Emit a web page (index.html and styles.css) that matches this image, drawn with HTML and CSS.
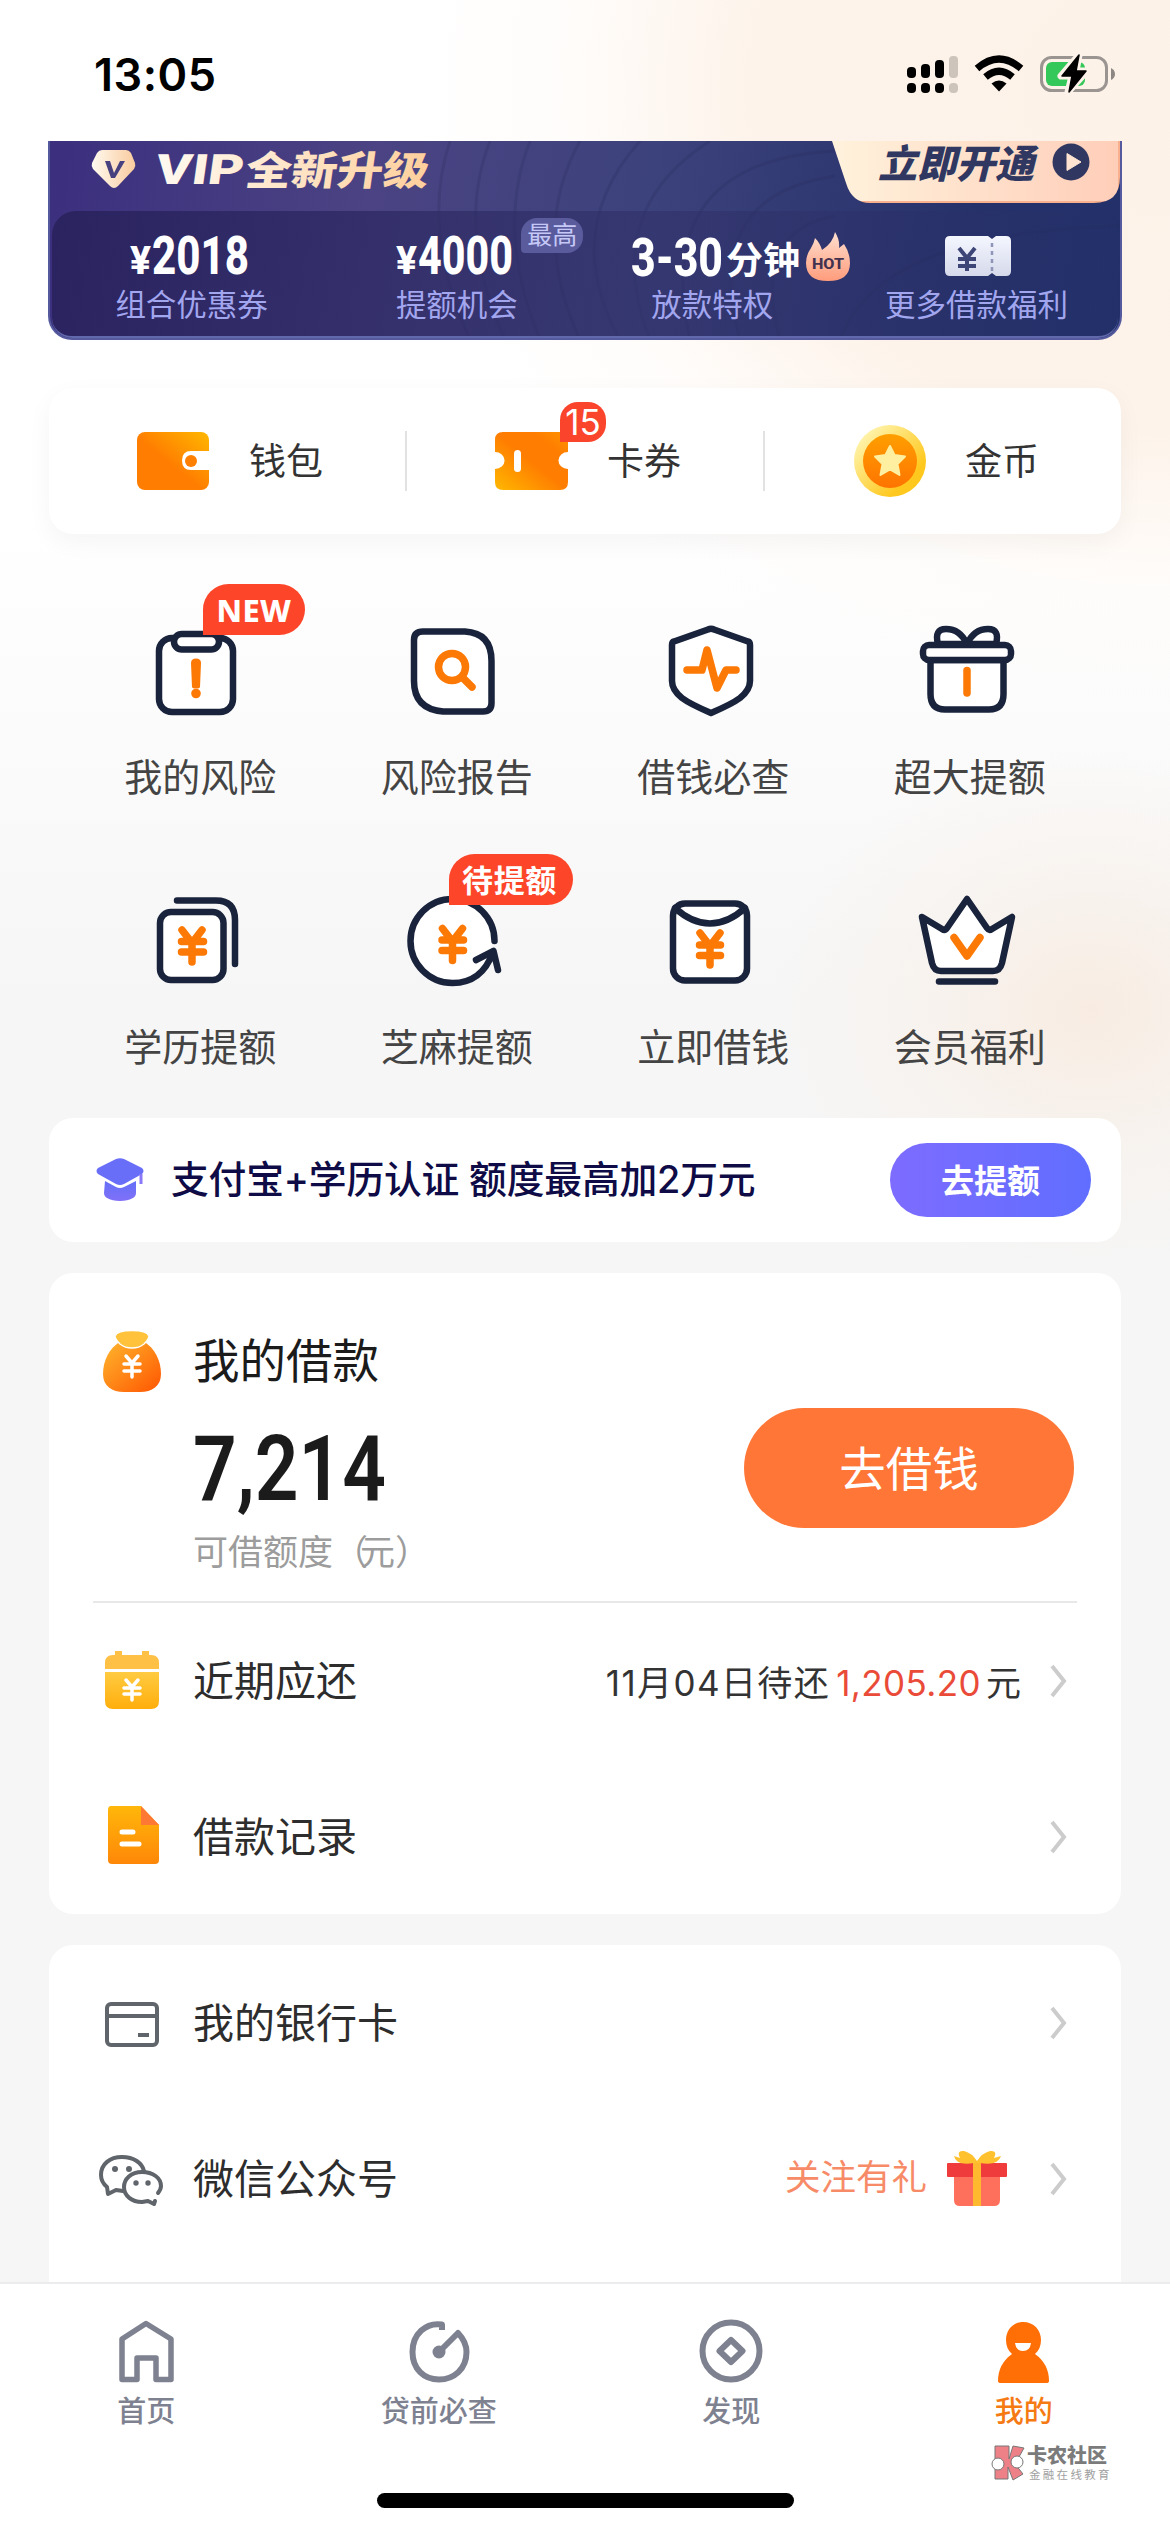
FILE: index.html
```html
<!DOCTYPE html>
<html lang="zh-CN">
<head>
<meta charset="utf-8">
<title>我的</title>
<link rel="stylesheet" href="styles.css">
</head>
<body>
<div class="page">
  <header class="status">
    <span class="clock">13:05</span>
    <svg class="status-icons" viewBox="900 50 220 50" width="220" height="50">
      <g fill="#000"><rect x="907" y="67" width="9" height="11" rx="4"/><rect x="921" y="64" width="9" height="14" rx="4"/><rect x="935" y="60" width="9" height="18" rx="4"/><rect x="907" y="83" width="9" height="10" rx="4"/><rect x="921" y="83" width="9" height="10" rx="4"/><rect x="935" y="83" width="9" height="10" rx="4"/></g>
      <g fill="#cdc4bc"><rect x="949" y="56" width="9" height="22" rx="4"/><rect x="949" y="83" width="9" height="10" rx="4"/></g>
      <g fill="none" stroke="#000" stroke-width="7"><path d="M977 68.500Q999 49.500 1021 68.500"/><path d="M985.500 77Q999 65.500 1012.500 77"/></g>
      <path d="M991.500 83.500Q999 77.500 1006.500 83.500L999 91.500Z"/>
      <rect x="1041.500" y="57.500" width="65" height="33" rx="10" fill="none" stroke="#9b9592" stroke-width="3"/>
      <path d="M1111 68Q1115 70 1115 74T1111 80Z" fill="#8d8784"/>
      <rect x="1046" y="62" width="39" height="24" rx="6" fill="#34c759"/>
      <path d="M1079 55L1061 76H1072L1068 92L1087 71H1076Z" fill="#000" stroke="#fdf3ea" stroke-width="7" stroke-linejoin="round"/>
      <path d="M1079 55L1062 76H1072L1069 92L1086 71H1076Z" fill="#000" stroke="#000" stroke-width="1.500" stroke-linejoin="round"/>
    </svg>
  </header>

  <section class="vip">
    <svg class="vip-waves" viewBox="0 0 1073 199" width="1073" height="199" fill="none" stroke="#252654" stroke-opacity=".2" stroke-width="3">
      <path d="M400 0Q370 90 420 199M440 0Q405 90 455 199M480 0Q445 90 490 199M530 0Q480 90 530 199M590 0Q510 90 570 199M660 0Q550 70 600 199M785 10Q600 20 640 199M785 35Q650 55 690 199M785 75Q700 90 730 199M1073 85Q830 90 790 199"/>
    </svg>
    <div class="vip-head">
      <svg class="vip-logo" viewBox="90 148 48 44" width="48" height="44">
        <defs><linearGradient id="gold" x1="0" x2="1"><stop stop-color="#fffaf0"/><stop offset="1" stop-color="#f9cb9e"/></linearGradient></defs>
        <path d="M102 150H126Q129 150 131 153L135 163Q136 166 134 169L118 186Q114 190 110 186L93 169Q91 166 92 163L97 153Q99 150 102 150Z" fill="url(#gold)"/>
        <path d="M105 161H110L114 173L120 161H125L115 178H111Z" fill="#48417f"/>
      </svg>
      <svg class="vip-title" viewBox="146 141 300 60" width="300" height="60">
        <defs><linearGradient id="goldText" gradientUnits="userSpaceOnUse" x1="153" x2="428" y1="0" y2="0"><stop stop-color="#fffaf2"/><stop offset="1" stop-color="#ffcf9c"/></linearGradient></defs>
        <g transform="translate(25 0) skewX(-8)" fill="url(#goldText)"><text x="155" y="184" font-size="42" textLength="88" lengthAdjust="spacingAndGlyphs">VIP</text><text class="cjk" x="245" y="185" font-size="40" textLength="183" lengthAdjust="spacingAndGlyphs">全新升级</text></g>
      </svg>
      <div class="vip-open"><span>立即开通</span>
        <svg viewBox="0 0 38 38" width="38" height="38"><circle cx="19" cy="19" r="18.500" fill="#303861"/><path d="M15 10.500L29 19L15 27.500Z" fill="#ffe4d2" stroke="#ffe4d2" stroke-linejoin="round"/></svg>
      </div>
    </div>
    <div class="vip-panel">
      <div class="perk p1"><svg class="num" viewBox="3 0 124 50" width="124" height="50"><text x="3" y="43" font-size="38" textLength="21" lengthAdjust="spacingAndGlyphs">¥</text><text x="25" y="43" font-size="54" textLength="97" lengthAdjust="spacingAndGlyphs">2018</text></svg><span>组合优惠券</span></div>
      <div class="perk p2"><svg class="num" viewBox="2 0 124 50" width="124" height="50"><text x="3" y="43" font-size="38" textLength="21" lengthAdjust="spacingAndGlyphs">¥</text><text x="25" y="43" font-size="54" textLength="95" lengthAdjust="spacingAndGlyphs">4000</text></svg><span>提额机会</span><b class="highest">最高</b></div>
      <div class="perk p3"><svg class="num" viewBox="0 0 230 50" width="230" height="50">
        <text x="34" y="45" font-size="54" textLength="92" lengthAdjust="spacingAndGlyphs">3-30</text><text x="129" y="43" font-size="37" class="cjk">分钟</text>
        <defs><linearGradient id="fire" x1="0" y1="0" x2="0" y2="1"><stop stop-color="#ffe0d0"/><stop offset="1" stop-color="#ff9c7c"/></linearGradient></defs>
        <path d="M238 1Q243 9 242 17L247 13Q253 22 253 32Q253 50 231 50Q209 50 209 32Q209 24 214 17Q217 12 218 7Q223 12 225 19Q236 12 238 1Z" fill="url(#fire)"/><text class="hot" x="215" y="38" font-size="15" textLength="32" lengthAdjust="spacingAndGlyphs">HOT</text></svg><span>放款特权</span></div>
      <div class="perk p4"><svg class="num" viewBox="942 230 72 50" width="72" height="50">
        <defs><linearGradient id="tk" x1="0" y1="0" x2="0" y2="1"><stop stop-color="#f5f7ff"/><stop offset="1" stop-color="#d5d9ea"/></linearGradient></defs>
        <path d="M952 235H990L994 238L998 235H1008Q1013 235 1013 240V270Q1013 275 1008 275H998L994 272L990 275H952Q947 275 947 270V240Q947 235 952 235Z" fill="url(#tk)"/>
        <path d="M994 242V271" stroke="#8e95b8" stroke-width="2.500" stroke-dasharray="4 4"/>
        <path d="M961 247L969 257L977 247M960 258H978M960 265H978M969 257V270" fill="none" stroke="#3d4677" stroke-width="4"/></svg><span>更多借款福利</span></div>
    </div>
  </section>

  <section class="wallet">
    <a><svg viewBox="130 420 85 82" width="85" height="82">
      <defs><linearGradient id="o1" x1="0" y1="1" x2="1" y2="0"><stop offset=".45" stop-color="#ff7d00"/><stop offset="1" stop-color="#ffb800"/></linearGradient><linearGradient id="o2" x1="0" y1="1" x2="1" y2="0"><stop stop-color="#ffb800"/><stop offset=".5" stop-color="#ff7d00"/><stop offset=".75" stop-color="#ff7d00"/><stop offset="1" stop-color="#ff9400"/></linearGradient></defs>
      <rect x="137" y="432" width="72" height="58" rx="8" fill="url(#o1)"/><path d="M210 451H191Q182 451 182 460.500T191 470H210Z" fill="#fff"/><circle cx="191" cy="461" r="6" fill="#ff8000"/></svg><span>钱包</span></a>
    <i></i>
    <a><svg viewBox="487 420 85 82" width="85" height="82"><path d="M502 432H559Q567 432 567 440V452A9 8 0 0 0 567 469V482Q567 490 559 490H502Q494 490 494 482V469A9 8 0 0 0 494 452V440Q494 432 502 432Z" fill="url(#o2)"/><rect x="513" y="450" width="7" height="22" rx="3.500" fill="#fff"/></svg><span>卡券</span><b class="count">15</b></a>
    <i></i>
    <a><svg viewBox="845 420 85 82" width="85" height="82">
      <defs><linearGradient id="c1" x1="0" y1="0" x2="1" y2="1"><stop offset=".15" stop-color="#fff2a8"/><stop offset=".75" stop-color="#ffc81e"/></linearGradient><linearGradient id="c2" x1="0" y1="0" x2="0" y2="1"><stop stop-color="#ff9f00"/><stop offset="1" stop-color="#ff7400"/></linearGradient></defs>
      <circle cx="889" cy="461" r="36" fill="url(#c1)"/><circle cx="889" cy="461" r="27" fill="url(#c2)"/><path d="M889 446L893.500 455L904 456.500L896.500 464L898.500 475L889 469.500L879.500 475L881.500 464L874 456.500L884.500 455Z" fill="#ffefa0" stroke="#ffefa0" stroke-linejoin="round" stroke-width="2"/></svg><span>金币</span></a>
  </section>

  <section class="grid">
    <a><svg viewBox="145 615 110 110"><rect x="159" y="638" width="74" height="74" rx="13"/><rect x="174" y="634" width="45" height="15.500" rx="7.750"/><path class="of" d="M191 663Q191 658.500 196 658.500T201 663L200 687Q199.500 688.500 196 688.500T192 687Z"/><circle class="of" cx="196" cy="693.500" r="4.800"/></svg><span>我的风险</span><b class="tag t-new">NEW</b></a>
    <a><svg viewBox="402 615 110 110"><path d="M423 631.500H465Q491.500 633 491.500 661V703Q491.500 711.500 483 711.500H443Q414 709 414 681V640Q414 631.500 423 631.500Z"/><circle class="o" cx="452" cy="667" r="13.500"/><path class="o" d="M462 677L472 687"/></svg><span>风险报告</span></a>
    <a><svg viewBox="658 615 110 110"><path d="M708 629.500Q711 628 714 629.500L748 641.500Q750 642 750 645V681Q750 690 740 698Q732 704 711 713Q690 704 682 698Q672 690 672 681V645Q672 642 674 641.500Z"/><path class="o" d="M687 670H702L707 650L717 688L726 670H736"/></svg><span>借钱必查</span></a>
    <a><svg viewBox="915 615 110 110"><path d="M930.500 660V694Q930.500 709.500 945 709.500H989Q1003.500 709.500 1003.500 694V660Z"/><path d="M938 644Q934 629 946 629Q960 629 967 644Q974 629 988 629Q1000 629 996 644Z"/><rect x="923" y="645" width="88" height="15" rx="6"/><path class="o" d="M967 670.500V693"/></svg><span>超大提额</span></a>
    <a><svg viewBox="145 885 110 110"><rect x="160" y="912" width="63.500" height="68" rx="11"/><path class="nf" d="M177 900.500H216Q235 900.500 235 920V964"/><path class="o" d="M182 930L192 943L202 930M181.500 941.500H203.500M181.500 952H203.500M192 943V962"/></svg><span>学历提额</span></a>
    <a><svg viewBox="402 885 110 110"><circle class="plate" cx="452" cy="941" r="40"/><path class="nf" d="M494.500 941A42 42 0 1 0 452.500 983Q482 983 493 952M476 960L493.500 951L498 970"/><path class="o" d="M442.500 928.500L452.500 941.500L462.500 928.500M442 940H463.500M442 950.500H463.500M452.500 941V960.500"/></svg><span>芝麻提额</span><b class="tag t-wait">待提额</b></a>
    <a><svg viewBox="658 885 110 110"><rect x="673" y="903.500" width="74" height="77" rx="12"/><path d="M675 908Q692 923.500 710 923.500T745 908"/><path class="o" d="M700 933L710 946L720 933M699.500 945H720.500M699.500 955.500H720.500M710 946V965"/></svg><span>立即借钱</span></a>
    <a><svg viewBox="915 885 110 110"><path d="M967 899L987 928Q989 931 992 929L1012 917L1002 963Q1000 971 993 971H941Q934 971 932 963L922 917L942 929Q945 931 947 928Z"/><path d="M939 981.500H995"/><path class="o" d="M954 937.500L967 956L980 937.500"/></svg><span>会员福利</span></a>
  </section>

  <section class="strip">
    <svg viewBox="96 1156 50 48" width="50" height="48"><defs><linearGradient id="pu" x1="0" y1="0" x2="0" y2="1"><stop stop-color="#6570f8"/><stop offset="1" stop-color="#8070f8"/></linearGradient></defs><path d="M98 1168L116 1159Q120 1157.500 124 1159L142 1168Q145 1171 142 1174L124 1184Q120 1186 116 1184L98 1174Q95 1171 98 1168Z" fill="#686ef8"/><path d="M105 1181L116 1187Q120 1189 124 1187L136 1181V1193Q136 1200 120 1201Q104 1200 104 1193Z" fill="url(#pu)"/><path d="M141 1174V1184" stroke="#8a78f8" stroke-width="3"/></svg>
    <span class="strip-text">支付宝+学历认证 额度最高加2万元</span>
    <button class="raise">去提额</button>
  </section>

  <section class="card loan">
    <div class="loan-top">
      <svg class="bag" viewBox="100 1328 64 68" width="64" height="68"><defs><linearGradient id="bg" x1="0" y1="0" x2="1" y2="1"><stop stop-color="#ffb82e"/><stop offset="1" stop-color="#ff5500"/></linearGradient></defs><path d="M121 1341H143C155 1348 161 1361 161 1374C161 1386 152 1392 140 1392H124C112 1392 103 1386 103 1374C103 1361 109 1348 121 1341Z" fill="url(#bg)"/><path d="M120 1344Q115 1339 115 1336Q117 1330.500 132 1330.500T149 1336Q149 1339 144 1344Q139 1348 132 1348T120 1344Z" fill="#ffc23a" stroke="#fff" stroke-width="1.500"/><path d="M126 1356L132 1363L138 1356M124 1364H140M124 1371H140M132 1363V1377" fill="none" stroke="#fff" stroke-width="3.500" stroke-linecap="round"/></svg>
      <div class="loan-info">
        <h2>我的借款</h2>
        <svg class="amount" viewBox="0 0 200 90" width="200" height="90"><text x="0" y="73" textLength="193" lengthAdjust="spacingAndGlyphs">7,214</text></svg>
        <p>可借额度<span class="paren">（</span>元）</p>
      </div>
      <button class="borrow">去借钱</button>
    </div>
    <div class="row">
      <svg viewBox="100 1650 64 64" width="64" height="64"><defs><linearGradient id="ca" x1="0" y1="0" x2="0" y2="1"><stop stop-color="#ffcb42"/><stop offset="1" stop-color="#ffae0c"/></linearGradient></defs><path d="M113 1656H115V1652H122V1656H142V1652H149V1656H151Q159 1656 159 1664V1670H105V1664Q105 1656 113 1656Z" fill="#ffc145"/><path d="M105 1673H159V1702Q159 1710 151 1710H113Q105 1710 105 1702Z" fill="url(#ca)"/><path d="M126 1681L132 1688L138 1681M124 1689H140M124 1695H140M132 1688V1701" fill="none" stroke="#fff" stroke-width="3.500" stroke-linecap="round"/></svg>
      <span class="label">近期应还</span>
      <span class="due"><span class="date">11月04日待还</span><em>1,205.20</em><span>元</span></span>
      <svg class="chev" viewBox="0 0 20 34"><path d="M3 2L15 17L3 32"/></svg>
    </div>
    <div class="row">
      <svg viewBox="100 1806 64 64" width="64" height="64"><defs><linearGradient id="dc" x1="0" y1="0" x2="0" y2="1"><stop stop-color="#ffb70a"/><stop offset="1" stop-color="#ff8708"/></linearGradient></defs><path d="M111 1807H141L159 1826V1861Q159 1865 155 1865H112Q108 1865 108 1861V1811Q108 1807 111 1807Z" fill="url(#dc)"/><path d="M141 1807L159 1826H141Z" fill="#ff7834"/><path d="M122 1833H133M122 1845H139" stroke="#fff" stroke-width="5" stroke-linecap="round"/></svg>
      <span class="label">借款记录</span>
      <svg class="chev" viewBox="0 0 20 34"><path d="M3 2L15 17L3 32"/></svg>
    </div>
  </section>

  <section class="card more">
    <div class="row">
      <svg viewBox="100 1991 64 64" width="64" height="64" fill="none" stroke="#60656b" stroke-width="4"><rect x="107" y="2004" width="50" height="41" rx="4"/><path d="M107 2016H157M138 2035H149"/></svg>
      <span class="label">我的银行卡</span>
      <svg class="chev" viewBox="0 0 20 34"><path d="M3 2L15 17L3 32"/></svg>
    </div>
    <div class="row">
      <svg viewBox="98 2147 66 64" width="66" height="64" fill="none" stroke="#60656b" stroke-width="4" stroke-linecap="round" stroke-linejoin="round"><path d="M107 2187Q101 2182 101 2175C101 2164 110 2157 122 2157C134 2157 142 2163 144 2171M107 2187L108 2194L116 2190L123 2191"/><path d="M158 2193Q161 2189 161 2186C161 2178 153 2172 142 2172C131 2172 124 2179 124 2187C124 2196 132 2202 142 2202L148 2201L154 2204L155 2201"/><g fill="#60656b" stroke="none"><circle cx="115" cy="2169" r="3"/><circle cx="129" cy="2169" r="3"/><circle cx="136" cy="2183" r="2.700"/><circle cx="148" cy="2183" r="2.700"/></g></svg>
      <span class="label">微信公众号</span>
      <span class="promo">关注有礼</span>
      <svg class="gift" viewBox="942 2149 66 60" width="66" height="60"><path d="M952 2175H998V2200Q998 2206 992 2206H958Q952 2206 952 2200Z" fill="#ff705c"/><rect x="945" y="2163" width="60" height="14" rx="1" fill="#ef3b3c"/><path d="M971 2163H979V2206H971Z" fill="#ffb92e"/><path d="M972 2163Q954 2166 952 2156L958 2158Q954 2150 962 2151Q970 2153 975 2161Q980 2153 988 2151Q996 2150 992 2158L999 2156Q996 2166 978 2163Z" fill="#ffc22e"/></svg>
      <svg class="chev" viewBox="0 0 20 34"><path d="M3 2L15 17L3 32"/></svg>
    </div>
  </section>

  <nav class="tabs">
    <a><svg viewBox="106 2312 80 80"><path d="M122 2379.500V2339L146 2323.500L171 2339V2379.500H156V2358H137V2379.500Z" fill="none" stroke="#7e8190" stroke-width="5.500" stroke-linejoin="round"/></svg><span>首页</span></a>
    <a><svg viewBox="398 2312 80 80"><g fill="none" stroke="#7e8190" stroke-width="6"><path d="M441 2330V2324.500C425 2322 411.500 2334 411.500 2352C411.500 2369 423 2379.500 438 2379.500S465.500 2369 465.500 2352Q465.500 2342 457 2333L438 2352" stroke-linejoin="round"/></g><circle cx="438" cy="2352" r="6.500" fill="#7e8190"/></svg><span>贷前必查</span></a>
    <a><svg viewBox="691 2312 80 80" fill="none" stroke="#7e8190" stroke-width="6" stroke-linejoin="round"><circle cx="731" cy="2351" r="28.500"/><path d="M731 2340L742.500 2351L731 2362L719.500 2351Z"/></svg><span>发现</span></a>
    <a class="on"><svg viewBox="983 2312 80 80" fill="#ff6f05"><path d="M1022 2322C1033 2322 1040 2330 1040 2340Q1040 2349 1034 2354Q1048 2364 1048 2381Q1048 2383 1045 2383H1000Q997 2383 997 2381Q997 2364 1011 2354Q1005 2349 1005 2340C1005 2330 1012 2322 1022 2322Z"/><path d="M1014 2343H1030Q1029 2351 1022 2351T1014 2343Z" fill="#fff"/></svg><span>我的</span></a>
    <div class="mark">
      <svg viewBox="990 2444 36 38" width="36" height="38"><g stroke="#777" stroke-width="1"><path d="M995 2446H1009V2459L1013 2446L1024 2448L1015 2464L1023 2474L1013 2480L1008 2467V2479H995Z" fill="#ee8088"/><circle cx="998" cy="2464" r="6" fill="#fff"/><circle cx="1017" cy="2462" r="6" fill="#fff"/></g></svg>
      <div><b>卡农社区</b><small>金融在线教育</small></div>
    </div>
    <div class="home-bar"></div>
  </nav>
</div>
</body>
</html>
```
FILE: styles.css
```css
* { box-sizing: border-box; margin: 0; padding: 0; }
body { width: 1170px; font-family: Inter, "Noto Sans CJK SC", sans-serif; color: #333; }
svg { flex: none; display: block; }
button { border: 0; font-family: inherit; color: #fff; }
.page {
  width: 1170px; height: 2532px; overflow: hidden; display: flex; flex-direction: column;
  background:
    radial-gradient(ellipse 320px 260px at 1090px 1010px, #f8ece2 0%, rgba(248,240,233,.6) 50%, rgba(247,247,247,0) 100%),
    radial-gradient(ellipse 760px 620px at 1170px 90px, #fdf2e8 0%, #fdf3ea 55%, rgba(255,250,246,.5) 80%, rgba(255,255,255,0) 100%),
    linear-gradient(#fff 0, #fff 520px, #f6f6f6 1000px);
}
.status { height: 141px; display: flex; justify-content: space-between; align-items: flex-start; padding: 50px 50px 0 94px; }
.clock { font-size: 45px; font-weight: 600; line-height: 50px; color: #000; letter-spacing: .5px; }

.vip { position: relative; height: 199px; margin: 0 48px; width: 1074px; border-radius: 0 0 24px 24px; overflow: hidden; background: linear-gradient(100deg, #3b2f7e 0%, #4b4383 30%, #3c427c 55%, #26316a 85%, #223069 100%); border: 2px solid #545a9d; border-top: 0; display: flex; flex-direction: column; }
.vip-waves { position: absolute; left: 0; top: 0; }
.vip-head { display: flex; height: 70px; align-items: flex-start; padding-left: 40px; position: relative; }
.vip-logo { margin-top: 7px; }
.vip-title { margin: 0 auto 0 8px; }
.vip-title text { font-family: Roboto, sans-serif; font-weight: 900; }
.vip-title .cjk { font-family: "Noto Sans CJK SC", sans-serif; }
.vip-open { width: 288px; height: 62px; background: linear-gradient(90deg, #fff2dc, #ffceb9); border-bottom: 2px solid #f8b18c; border-right: 2px solid #f8b18c; display: flex; gap: 18px; padding: 1px 0 0 46px; clip-path: path("M0 0H288V36Q288 62 262 62H38Q20 62 14 42Z"); }
.vip-open span { font: italic 900 39px/42px "Noto Sans CJK SC", sans-serif; color: #303861; margin-top: -2px; }
.vip-open svg { margin-top: 1px; }
.vip-panel { position: relative; flex: 1; margin: 0 2px; border-radius: 24px 24px 20px 20px; background: linear-gradient(100deg, rgba(39,33,90,.85), rgba(49,48,105,.6) 55%, rgba(35,48,105,.4)); display: flex; border-bottom: 2px solid #6169ac; padding-left: 7px; }
.perk { position: relative; display: flex; flex-direction: column; align-items: center; padding-top: 20px; width: 266px; }
.perk span { font-size: 30.500px; line-height: 40px; margin-top: 4px; color: #a2a6ef; white-space: nowrap; }
.p3 { width: 246px; } .p4 { width: 284px; }
.num { overflow: visible; }
.num text { font-family: Roboto, sans-serif; font-weight: 800; fill: #fff; }
.num .cjk { font-family: "Noto Sans CJK SC", sans-serif; font-weight: 700; }
.num .hot { fill: #43324f; }
.highest { position: absolute; left: 197px; top: 7px; width: 62px; height: 35px; border-radius: 16px 16px 16px 4px; background: #5a5b9c; color: #c5c8f7; font-size: 25px; font-weight: 400; line-height: 34px; text-align: center; }

.wallet { margin: 48px 49px 0; height: 146px; border-radius: 24px; background: #fff; box-shadow: 0 8px 26px rgba(0,0,0,.045); display: flex; align-items: center; }
.wallet a { position: relative; flex: 1; display: flex; align-items: center; padding-left: 81px; gap: 34px; font-size: 37px; line-height: 50px; }
.wallet a span { margin-top: 2px; }
.wallet i { width: 2px; height: 60px; background: #e2e2e2; }
.count { position: absolute; left: 153px; top: -18px; width: 46px; height: 40px; border-radius: 18px 18px 18px 0; background: #fa442c; color: #fff; font: 35px/40px Inter, sans-serif; text-align: center; }

.grid { margin: 36px 72px 0; height: 548px; display: grid; grid-template-columns: repeat(4, 256.500px); grid-auto-rows: 270px; }
.grid a { position: relative; display: flex; flex-direction: column; align-items: center; padding-top: 45px; font-size: 38px; color: #444; }
.grid a > span { line-height: 54px; margin-top: 25px; }
.grid svg { width: 110px; height: 110px; fill: #fff; stroke: #19233b; stroke-width: 6.500; stroke-linecap: round; stroke-linejoin: round; }
.grid .o { fill: none; stroke: #fc7906; stroke-width: 7.500; }
.grid .of { fill: #fc7906; stroke: none; }
.grid .nf { fill: none; }
.grid .plate { stroke: none; }
.tag { position: absolute; top: 14px; height: 51px; border-radius: 26px 26px 26px 0; background: #fd4529; color: #fff; text-align: center; font: 700 31px/52px "Noto Sans", "Noto Sans CJK SC", sans-serif; }
.t-new { left: 131px; width: 102px; font-weight: 800; letter-spacing: .5px; }
.t-wait { left: 120px; width: 124px; letter-spacing: .6px; padding-right: 2px; }

.strip { margin: 0 49px; height: 124px; border-radius: 24px; background: #fff; display: flex; align-items: center; padding: 0 30px 0 47px; }
.strip-text { margin: -2px auto 0 25px; font-size: 37.800px; font-weight: 500; line-height: 50px; color: #0e0b46; white-space: nowrap; letter-spacing: -.2px; }
.raise { width: 201px; height: 74px; border-radius: 37px; background: linear-gradient(90deg, #7d6cff, #606eff); font-size: 33px; font-weight: 700; padding-bottom: 3px; }

.card { margin: 31px 49px 0; border-radius: 24px; background: #fff; }
.loan { height: 641px; }
.loan-top { height: 330px; margin: 0 44px; border-bottom: 2px solid #e8e8e8; display: flex; padding-left: 7px; }
.bag { margin-top: 55px; }
.loan-info { margin: 54px auto 0 29px; }
.loan-info h2 { font-size: 46.500px; font-weight: 400; line-height: 68px; color: #1b1b1b; }
.amount { margin-top: 32px; }
.amount text { font: 600 91px Roboto, sans-serif; fill: #1b1b1b; }
.loan-info p { font-size: 35px; line-height: 50px; margin-top: 10px; color: #9c9c9c; white-space: nowrap; }
.paren { letter-spacing: -8px; }
.borrow { width: 330px; height: 120px; margin: 135px 3px 0 0; border-radius: 60px; background: #ff7637; font-size: 46.500px; padding-bottom: 5px; }
.row { height: 156px; display: flex; align-items: center; padding: 0 52px 0 51px; }
.label { margin: 0 auto 0 29px; font-size: 41px; line-height: 60px; color: #2d2d2d; }
.due { font-size: 35px; display: flex; color: #333; align-items: baseline; white-space: nowrap; margin-top: -2px; }
.date { letter-spacing: 1.400px; }
.due em { font-style: normal; color: #ea4b38; margin: 0 5px 0 6px; letter-spacing: .4px; }
.chev { width: 20px; height: 34px; margin-left: 28px; fill: none; stroke: #ccc; stroke-width: 4; }
.more { height: 337px; flex: none; border-radius: 24px 24px 0 0; }
.promo { font-size: 35.500px; line-height: 50px; color: #f78b67; margin: -2px 17px 0 0; }
.gift { margin-right: 11px; }
.more .row + .row { padding-left: 49px; }

.tabs { position: relative; height: 250px; background: #fff; border-top: 2px solid #ececee; display: flex; align-items: flex-start; }
.tabs a { flex: 1; display: flex; flex-direction: column; align-items: center; padding-top: 28px; font-size: 29px; font-weight: 500; color: #7e8190; }
.tabs a svg { width: 80px; height: 80px; }
.tabs a span { line-height: 40px; }
.tabs a.on { color: #f57a13; }
.home-bar { position: absolute; left: 377px; top: 209px; width: 417px; height: 15px; border-radius: 8px; background: #000; }
.mark { position: absolute; left: 990px; top: 160px; display: flex; }
.mark div { display: flex; flex-direction: column; padding-left: 1px; }
.mark b { font-size: 20px; line-height: 24px; color: #7b7b7b; font-weight: 900; }
.mark small { font-size: 11.500px; line-height: 14px; color: #a0a0a0; letter-spacing: 2.300px; margin-left: 2px; white-space: nowrap; }
```
